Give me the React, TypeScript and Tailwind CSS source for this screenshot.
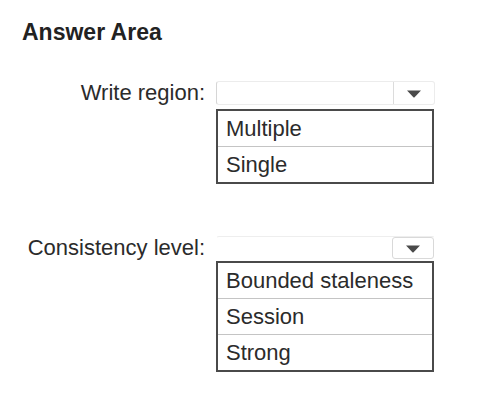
import React from 'react';

type Question = {
  label: string;
  options: string[];
  boxed: boolean; // first dropdown shows its faint outline, second only the arrow cell
  top: string;
  listGap: string;
};

const questions: Question[] = [
  { label: 'Write region:', options: ['Multiple', 'Single'], boxed: true, top: 'mt-[36px]', listGap: 'mt-[4px]' },
  { label: 'Consistency level:', options: ['Bounded staleness', 'Session', 'Strong'], boxed: false, top: 'mt-[52px]', listGap: 'mt-[1px]' },
];

function Caret() {
  return (
    <svg width="16" height="9" viewBox="0 0 16 9" aria-hidden="true">
      <path d="M1 1.5 L15 1.5 L8.6 8.2 Q8 8.8 7.4 8.2 Z" fill="#4a4a4a" />
    </svg>
  );
}

function Dropdown({ boxed }: { boxed: boolean }) {
  return (
    <div
      className={
        boxed
          ? 'flex h-[24px] w-[219px] rounded-[3px] border border-[#ececec] border-l-[#d6d6d6]'
          : 'flex h-[24px] w-[219px] rounded-[3px] border border-transparent border-t-[#eeeeee]'
      }
    >
      <div className="flex-1" />
      <div
        className={
          boxed
            ? 'flex w-[41px] items-center justify-center border-l border-[#dcdcdc]'
            : 'flex w-[42px] items-center justify-center rounded-[3px] border border-[#d9d9d9]'
        }
      >
        <Caret />
      </div>
    </div>
  );
}

function OptionList({ options }: { options: string[] }) {
  return (
    <div className="w-[218px] border-2 border-[#4a4a4a] bg-white">
      {options.map((option, i) => (
        <div
          key={option}
          className={
            i === 0
              ? 'flex h-[35px] items-center pl-[8px] text-[22px] text-[#2b2b2b]'
              : 'flex h-[36px] items-center border-t border-[#c4c4c4] pl-[8px] text-[22px] text-[#2b2b2b]'
          }
        >
          {option}
        </div>
      ))}
    </div>
  );
}

export default function App() {
  return (
    <div className="h-[419px] w-[498px] bg-white font-['Liberation_Sans',Arial,sans-serif]">
      <h1 className="pl-[22px] pt-[19px] text-[23px] font-bold leading-[26px] text-[#222]">
        Answer Area
      </h1>
      {questions.map((q) => (
        <div key={q.label} className={`flex ${q.top}`}>
          <div className="flex h-[24px] w-[205px] items-center justify-end text-[22px] leading-none text-[#2b2b2b]">
            {q.label}
          </div>
          <div className="ml-[11px]">
            <Dropdown boxed={q.boxed} />
            <div className={q.listGap}>
              <OptionList options={q.options} />
            </div>
          </div>
        </div>
      ))}
    </div>
  );
}
